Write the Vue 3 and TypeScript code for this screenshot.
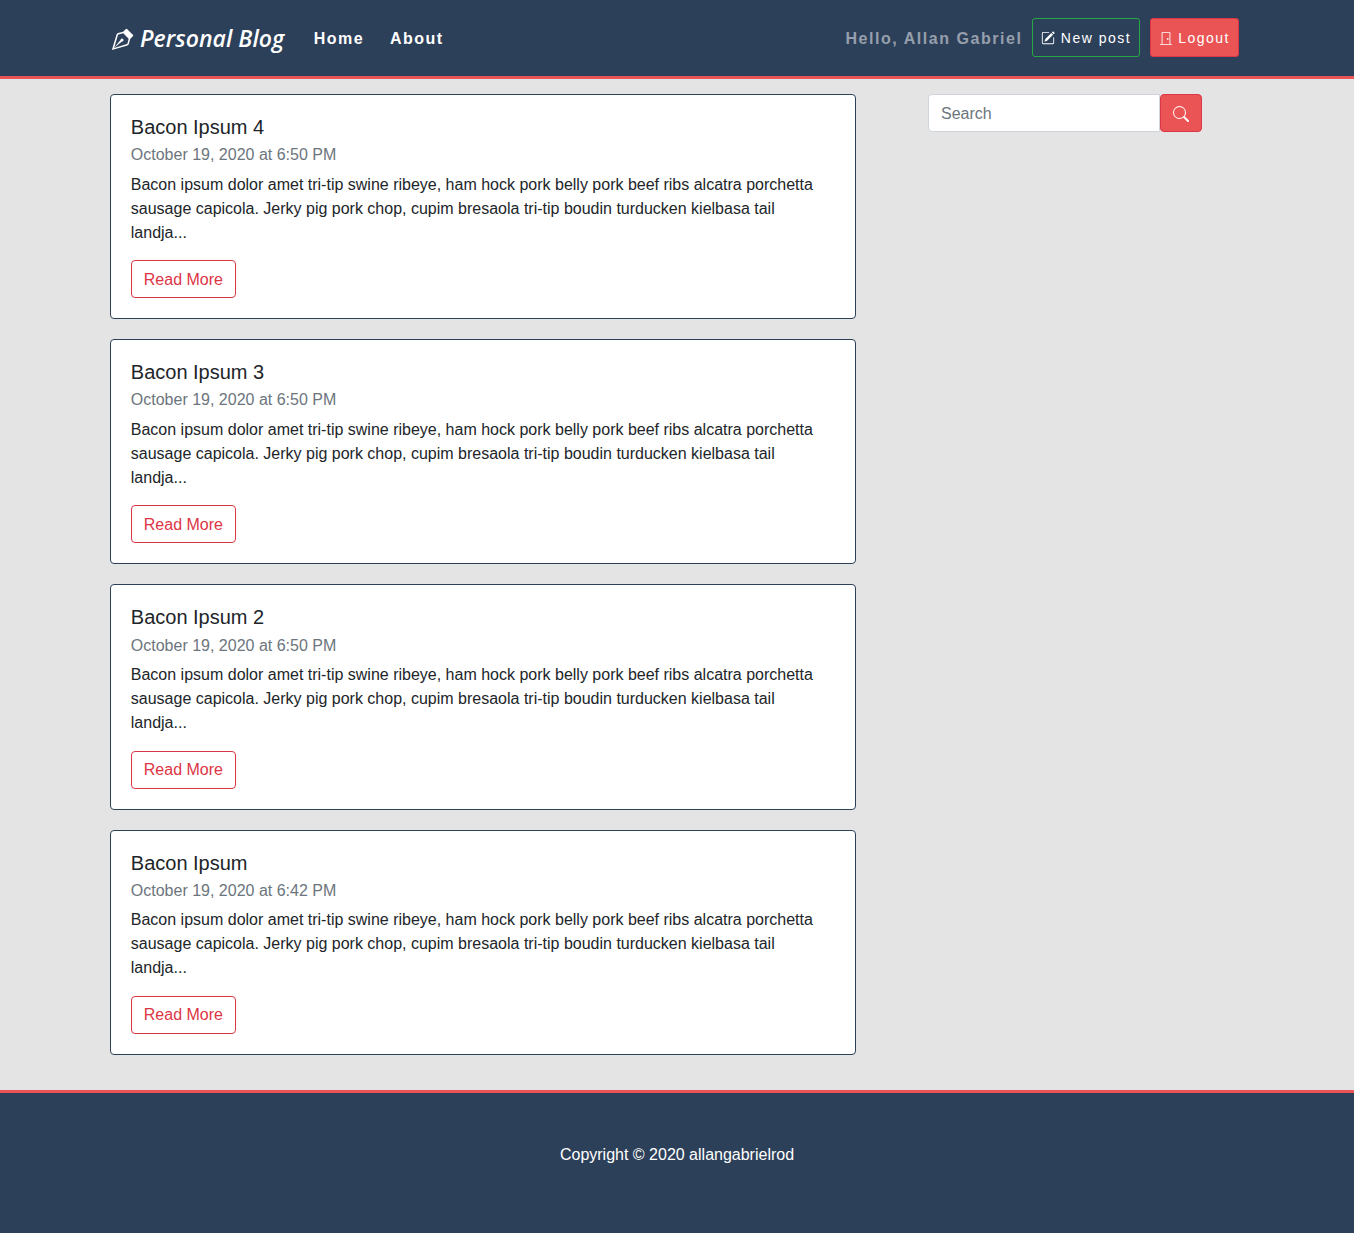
<script setup lang="ts">
interface Post {
  id: number
  title: string
  date: string
}

const excerpt =
  'Bacon ipsum dolor amet tri-tip swine ribeye, ham hock pork belly pork beef ribs alcatra porchetta sausage capicola. Jerky pig pork chop, cupim bresaola tri-tip boudin turducken kielbasa tail landja...'

const posts: Post[] = [
  { id: 4, title: 'Bacon Ipsum 4', date: 'October 19, 2020 at 6:50 PM' },
  { id: 3, title: 'Bacon Ipsum 3', date: 'October 19, 2020 at 6:50 PM' },
  { id: 2, title: 'Bacon Ipsum 2', date: 'October 19, 2020 at 6:50 PM' },
  { id: 1, title: 'Bacon Ipsum', date: 'October 19, 2020 at 6:42 PM' },
]
</script>

<template>
  <div class="page">
    <header class="navbar">
      <div class="navbar-inner">
        <a class="brand">
          <svg class="brand-icon" viewBox="0 0 16 16" fill="currentColor">
            <path fill-rule="evenodd" d="M10.646.646a.5.5 0 0 1 .708 0l4 4a.5.5 0 0 1 0 .708l-1.902 1.902-.829 3.313a1.5 1.5 0 0 1-1.024 1.073L1.254 14.746 4.358 4.4A1.5 1.5 0 0 1 5.43 3.377l3.313-.828L10.646.646zm-1.8 2.908l-3.173.793a.5.5 0 0 0-.358.342l-2.57 8.565 8.567-2.57a.5.5 0 0 0 .34-.357l.794-3.174-3.6-3.6z" />
            <path fill-rule="evenodd" d="M2.832 13.228L8 9a1 1 0 1 0-1-1l-4.228 5.168-.026.086.086-.026z" />
          </svg>
          <span class="brand-name">Personal Blog</span>
        </a>
        <nav class="links">
          <a>Home</a>
          <a>About</a>
        </nav>
        <div class="account">
          <span class="greeting">Hello, Allan Gabriel</span>
          <a class="btn-nav btn-new">
            <svg viewBox="0 0 16 16" fill="currentColor">
              <path d="M15.502 1.94a.5.5 0 0 1 0 .706L14.459 3.69l-2-2L13.502.646a.5.5 0 0 1 .707 0l1.293 1.293zm-1.75 2.456l-2-2L4.939 9.21a.5.5 0 0 0-.121.196l-.805 2.414a.25.25 0 0 0 .316.316l2.414-.805a.5.5 0 0 0 .196-.12l6.813-6.814z" />
              <path fill-rule="evenodd" d="M1 13.5A1.5 1.5 0 0 0 2.5 15h11a1.5 1.5 0 0 0 1.5-1.5v-6a.5.5 0 0 0-1 0v6a.5.5 0 0 1-.5.5h-11a.5.5 0 0 1-.5-.5v-11a.5.5 0 0 1 .5-.5H9a.5.5 0 0 0 0-1H2.5A1.5 1.5 0 0 0 1 2.5v11z" />
            </svg>
            <span>New post</span>
          </a>
          <a class="btn-nav btn-logout">
            <svg viewBox="0 0 16 16" fill="currentColor">
              <path fill-rule="evenodd" d="M3 2a1 1 0 0 1 1-1h8a1 1 0 0 1 1 1v13h-1V2H4v13H3V2z" />
              <path d="M10 10a1 1 0 1 0 0-2 1 1 0 0 0 0 2z" />
              <path fill-rule="evenodd" d="M1 15.5a.5.5 0 0 1 .5-.5h13a.5.5 0 0 1 0 1h-13a.5.5 0 0 1-.5-.5z" />
            </svg>
            <span>Logout</span>
          </a>
        </div>
      </div>
    </header>

    <main class="content">
      <section class="posts">
        <article v-for="post in posts" :key="post.id" class="card">
          <h5 class="card-title">{{ post.title }}</h5>
          <h6 class="card-date">{{ post.date }}</h6>
          <p class="card-text">{{ excerpt }}</p>
          <a class="read-more">Read More</a>
        </article>
      </section>
      <aside class="sidebar">
        <form class="search" @submit.prevent>
          <input type="text" placeholder="Search" />
          <button type="submit" aria-label="Search">
            <svg viewBox="0 0 16 16" fill="currentColor">
              <path fill-rule="evenodd" d="M10.442 10.442a1 1 0 0 1 1.415 0l3.85 3.85a1 1 0 0 1-1.414 1.415l-3.85-3.85a1 1 0 0 1 0-1.415z" />
              <path fill-rule="evenodd" d="M6.5 12a5.5 5.5 0 1 0 0-11 5.5 5.5 0 0 0 0 11zM13 6.5a6.5 6.5 0 1 1-13 0 6.5 6.5 0 0 1 13 0z" />
            </svg>
          </button>
        </form>
      </aside>
    </main>

    <footer class="footer">Copyright © 2020 allangabrielrod</footer>
  </div>
</template>

<style>
body {
  margin: 0;
  background: #e4e4e4;
}
</style>

<style scoped>
.page {
  display: flex;
  flex-direction: column;
  min-height: 100vh;
  box-sizing: border-box;
  background: #e4e4e4;
  color: #212529;
  font: 400 16px/1.5 'Liberation Sans', Arial, sans-serif;
}
.page * {
  box-sizing: border-box;
}
.navbar {
  height: 79px;
  background: #2d4059;
  border-bottom: 3px solid #ea5455;
}
.navbar-inner {
  display: flex;
  align-items: center;
  height: 76px;
  padding: 0 115px 0 110px;
  color: #fff;
}
.brand {
  display: flex;
  align-items: center;
  width: 174px;
  white-space: nowrap;
}
.brand-icon {
  width: 24px;
  height: 24px;
  margin: 3px 6px 0 0;
  flex: none;
}
.brand-name {
  font: italic 600 23px/36px 'Open Sans', 'Noto Sans', cursive;
  letter-spacing: 0.05px;
}
.links {
  display: flex;
  gap: 26px;
  margin-left: 29.8px;
  padding-top: 2px;
  font-weight: 700;
  letter-spacing: 1.45px;
}
.account {
  display: flex;
  align-items: center;
  margin-left: auto;
}
.greeting {
  margin-right: 9.4px;
  padding-top: 2px;
  font-weight: 700;
  letter-spacing: 1.54px;
  color: rgba(255, 255, 255, 0.5);
}
.btn-nav {
  display: flex;
  align-items: center;
  height: 39px;
  margin-top: -1px;
  padding: 1px 8px 0;
  border: 1px solid;
  border-radius: 3px;
  font-size: 14px;
  letter-spacing: 1.5px;
  white-space: nowrap;
}
.btn-nav svg {
  width: 14px;
  height: 14px;
  margin-right: 5px;
}
.btn-new {
  margin-right: 10px;
  border-color: #28a745;
}
.btn-new svg {
  margin-right: 6px;
}
.btn-logout {
  border-color: #dc3545;
  background: #ea5455;
}
.content {
  display: flex;
  align-items: flex-start;
  padding: 15px 152px 15px 109.8px;
}
.posts {
  width: 746px;
}
.card {
  margin-bottom: 20px;
  padding: 20px;
  border: 1px solid #2d4059;
  border-radius: 4px;
  background: #fff;
}
.card-title {
  margin: 0 0 12px;
  font-size: 20px;
  font-weight: 400;
  line-height: 1.2;
}
.card-date {
  margin: -5.8px 0 7.8px;
  font-size: 16px;
  font-weight: 400;
  line-height: 1.2;
  color: #6c757d;
}
.card-text {
  margin: 0;
  padding: 0.4px 0 15.64px;
}
.read-more {
  display: block;
  width: fit-content;
  padding: 6.4px 12px 5.6px;
  border: 1px solid #dc3545;
  border-radius: 4px;
  color: #dc3545;
}
.sidebar {
  width: 274px;
  margin-left: auto;
}
.search {
  display: flex;
}
.search input {
  width: 232px;
  height: 38px;
  padding: 7px 12px 5px;
  border: 1px solid #ced4da;
  border-radius: 4px 0 0 4px;
  background: #fff;
  font: inherit;
  outline: none;
}
.search input::placeholder {
  color: #6c757d;
  opacity: 1;
}
.search button {
  display: flex;
  align-items: center;
  justify-content: center;
  width: 42px;
  height: 38px;
  padding: 0;
  border: 1px solid #dc3545;
  border-radius: 4px;
  background: #ea5455;
  color: #fff;
}
.search svg {
  width: 16px;
  height: 16px;
  margin-top: 2px;
}
.footer {
  flex: 1;
  padding-top: 50px;
  border-top: 3px solid #ea5455;
  background: #2d4059;
  color: #fff;
  text-align: center;
}
</style>
